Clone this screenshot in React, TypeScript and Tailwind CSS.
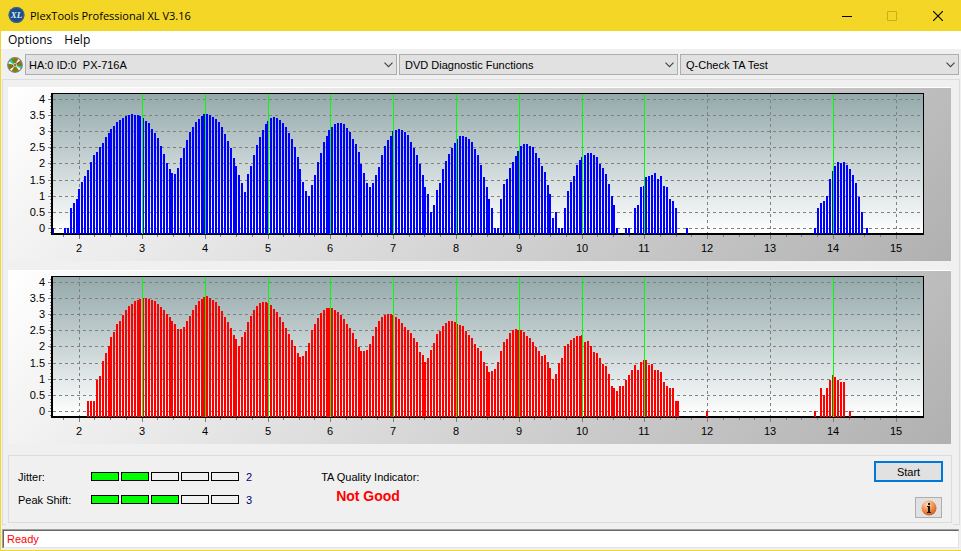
import React, { useState } from 'react';

// Height of every sample bar in px above the floor of the plot; `from` is the index of the first one.
type Run = { from: number; heights: number[] };

const PITS: Run[] = [
  { from: -9, heights: [6] },
  {
    from: -5,
    heights: [
      6, 6, 26, 31, 35, 45, 52, 58, 64, 72, 79, 82, 87, 91, 97, 101, 105, 108, 112, 114, 116, 118, 119, 120, 119, 119,
      118, 116, 113, 111, 105, 101, 96, 88, 80, 71, 65, 61, 60, 66, 76, 86, 94, 102, 107, 112, 115, 118, 120, 120, 119,
      117, 115, 112, 107, 100, 93, 86, 76, 68, 59, 51, 42, 60, 68, 79, 89, 97, 104, 110, 113, 116, 117, 116, 114, 111,
      107, 101, 95, 87, 77, 65, 52, 43, 38, 49, 59, 72, 81, 92, 98, 104, 107, 110, 111, 111, 110, 106, 102, 95, 90, 82,
      70, 61, 51, 47, 51, 59, 67, 79, 88, 94, 98, 103, 104, 105, 104, 102, 99, 92, 86, 79, 70, 59, 47, 40, 22, 29, 44,
      51, 65, 73, 80, 86, 91, 95, 98, 98, 97, 95, 92, 85, 79, 69, 57, 47, 35, 26, 6, 6, 35, 50, 55, 66, 72, 78, 83, 88,
      90, 90, 88, 87, 81, 76, 68, 62, 49, 40, 16, 22, 6, 6, 26, 43, 52, 58, 69, 74, 77, 79, 81, 81, 79, 77, 70, 66, 60,
      50, 38, 29, 6,
    ],
  },
  { from: 188, heights: [6, 6, 0, 26, 29, 47, 48, 57, 58, 59, 61, 55, 58, 48, 47, 35, 33, 26] },
  { from: 209, heights: [6] },
  { from: 253, heights: [6, 26, 31, 33, 38, 55, 63, 68, 72, 71, 72, 69, 65, 59, 51, 37, 22, 0, 6] },
];

const LANDS: Run[] = [
  {
    from: 3,
    heights: [
      16, 16, 16, 37, 41, 56, 64, 71, 80, 85, 93, 96, 102, 107, 111, 113, 116, 117, 118, 119, 119, 118, 117, 116, 113,
      110, 107, 103, 100, 96, 93, 88, 88, 90, 96, 101, 107, 112, 116, 118, 120, 121, 119, 117, 115, 111, 106, 100, 95,
      89, 82, 78, 71, 80, 85, 95, 101, 107, 111, 114, 115, 115, 114, 112, 108, 105, 100, 95, 89, 83, 77, 71, 64, 60, 61,
      66, 74, 87, 93, 99, 104, 107, 109, 109, 109, 107, 105, 102, 98, 93, 89, 84, 78, 70, 66, 66, 67, 73, 81, 90, 96,
      100, 102, 103, 103, 102, 100, 98, 94, 90, 87, 84, 79, 75, 65, 62, 55, 59, 67, 74, 83, 86, 91, 94, 96, 96, 95, 93,
      92, 91, 86, 82, 79, 73, 69, 66, 55, 51, 45, 46, 48, 55, 66, 75, 78, 84, 87, 88, 87, 87, 85, 81, 79, 75, 70, 66,
      61, 62, 55, 49, 38, 43, 54, 59, 71, 73, 77, 79, 81, 81, 82, 75, 76, 71, 65, 64, 59, 53, 51, 43, 31, 29, 26, 31,
      31, 37, 42, 47, 52, 47, 55, 57, 57, 52, 53, 47, 47, 45, 35, 31, 29, 29, 16, 16,
    ],
  },
  { from: 216, heights: [6] },
  { from: 253, heights: [6, 0, 29, 22, 29, 37, 42, 40, 37, 35, 35, 0, 6] },
];

const X_TICKS = [
  { label: 2, x: 71 }, { label: 3, x: 134 }, { label: 4, x: 197 }, { label: 5, x: 260 }, { label: 6, x: 322 },
  { label: 7, x: 385 }, { label: 8, x: 448 }, { label: 9, x: 511 }, { label: 10, x: 574 }, { label: 11, x: 636 },
  { label: 12, x: 699 }, { label: 13, x: 762 }, { label: 14, x: 825 }, { label: 15, x: 888 },
];

const Y_TICKS = [
  { label: '4', y: 12 }, { label: '3.5', y: 28 }, { label: '3', y: 44 }, { label: '2.5', y: 60 }, { label: '2', y: 76 },
  { label: '1.5', y: 93 }, { label: '1', y: 109 }, { label: '0.5', y: 125 }, { label: '0', y: 141 },
];

const MARKERS = [3, 4, 5, 6, 7, 8, 9, 10, 11, 14];
const FLOOR = 147;

// 65 samples take 189 px
const barX = (i: number) => 70 + 3 * i - Math.floor((i * 6 + 4) / 65);

const minorX = Array.from({ length: 54 }, (_, i) => Math.round(55 + i * 15.71)).filter(
  x => !X_TICKS.some(t => Math.abs(t.x - x) < 3)
);
const minorY = Array.from({ length: 43 }, (_, i) => Math.round(9 + i * 3.23));

const Chart: React.FC<{ id: string; title: string; color: string; runs: Run[] }> = ({ id, title, color, runs }) => (
  <svg viewBox="0 0 943 174" className="block w-full" role="img" aria-label={title} shapeRendering="crispEdges">
    <defs>
      <linearGradient id={`${id}-panel`} gradientUnits="userSpaceOnUse" x1="386" y1="-386" x2="943" y2="174">
        <stop offset="0" stopColor="#ffffff" />
        <stop offset="1" stopColor="#b0b0b0" />
      </linearGradient>
      <linearGradient id={`${id}-plot`} x1="0" y1="0" x2="0" y2="1">
        <stop offset="0" stopColor="#94a9ab" />
        <stop offset="1" stopColor="#ffffff" />
      </linearGradient>
    </defs>
    <rect width="943" height="174" fill={`url(#${id}-panel)`} />
    <rect width="943" height="1" fill="#ffffff" />
    <rect x="45" y="7" width="870" height="139" fill={`url(#${id}-plot)`} />

    <g stroke="#808080" strokeWidth="1" strokeDasharray="3 3">
      {Y_TICKS.map(t => <line key={t.label} x1="45" x2="915" y1={t.y + 0.5} y2={t.y + 0.5} />)}
      {X_TICKS.map(t => <line key={t.label} x1={t.x + 0.5} x2={t.x + 0.5} y1="7" y2="146" />)}
    </g>

    <path d="M43 6H916V148H43Z M45 7V146H915V7Z" fillRule="evenodd" fill="#000000" />

    <g fill={color}>
      {runs.map(run =>
        run.heights.map((h, k) => (
          <rect key={run.from + k} x={barX(run.from + k)} y={FLOOR - h} width="2" height={h} />
        ))
      )}
    </g>
    <rect x="43" y="6" width="2" height="142" fill="#000000" />

    <g fill="#00ff00">
      {X_TICKS.filter(t => MARKERS.includes(t.label)).map(t => (
        <rect key={t.label} x={t.x} y="7" width="1" height="140" />
      ))}
    </g>

    <g fill="#808080">
      {Y_TICKS.map(t => <rect key={t.label} x="40" y={t.y} width="3" height="1" />)}
      {minorY.map(y => <rect key={y} x="42" y={y} width="1" height="1" />)}
      {X_TICKS.map(t => <rect key={t.label} x={t.x} y="148" width="1" height="4" />)}
      {minorX.map(x => <rect key={x} x={x} y="148" width="1" height="2" />)}
    </g>

    <g fontSize="11" fill="#000000">
      {Y_TICKS.map(t => <text key={t.label} x="37" y={t.y + 4} textAnchor="end">{t.label}</text>)}
      {X_TICKS.map(t => <text key={t.label} x={t.x} y="165" textAnchor="middle">{t.label}</text>)}
    </g>
  </svg>
);

const Combo: React.FC<{ label: string; options: string[]; inset?: boolean }> = ({ label, options, inset }) => (
  <div className="relative">
    <select
      aria-label={label}
      className={`block h-[21px] w-full appearance-none border border-[#adadad] bg-[#e1e1e1] pr-5 text-[11px] text-black outline-none ${inset ? 'pl-[5px]' : 'pl-[3px]'}`}
    >
      {options.map(o => <option key={o}>{o}</option>)}
    </select>
    <svg className="pointer-events-none absolute top-[8px] right-1 h-[6px] w-[9px]" viewBox="0 0 9 6">
      <path d="M0.5 0.7 4.5 4.7 8.5 0.7" fill="none" stroke="#404040" strokeWidth="1.1" />
    </svg>
  </div>
);

const Meter: React.FC<{ label: string; value: number }> = ({ label, value }) => (
  <div className="flex h-[23px] items-center">
    <span className="w-[73px]">{label}:</span>
    <div
      role="meter"
      aria-label={label}
      aria-valuemin={0}
      aria-valuemax={5}
      aria-valuenow={value}
      className="flex gap-[2px]"
    >
      {[1, 2, 3, 4, 5].map(n => (
        <span key={n} className={`h-[9px] w-7 border border-black ${n <= value ? 'bg-[#00ff00]' : 'bg-[#f0f0f0]'}`} />
      ))}
    </div>
    <span className="ml-[7px] text-[#000080]">{value}</span>
  </div>
);

const LogoIcon = () => (
  <svg width="17" height="17" viewBox="0 0 17 17" aria-hidden="true">
    <circle cx="8.5" cy="8" r="8" fill="#1d4e8c" />
    <circle cx="8.5" cy="8" r="7.4" fill="none" stroke="#4a6f86" strokeWidth="0.8" />
    <text
      x="8.5" y="11" textAnchor="middle" fontSize="9" fontWeight="bold" fontStyle="italic" fill="#dfeaf6"
      className="font-['Liberation_Serif',serif]"
    >
      XL
    </text>
  </svg>
);

const DiscIcon = () => (
  <svg width="16" height="16" viewBox="0 0 16 16" aria-hidden="true">
    <circle cx="8" cy="8" r="7.3" fill="#808000" stroke="#808080" strokeWidth="1.2" />
    <path d="M8 8 1.4 6.6 2.2 4.4Z" fill="#ffffff" />
    <path d="M8 8 2.2 4.4 4 2.4Z" fill="#00e0e0" />
    <path d="M8 8 11.4 2 13 3.6Z" fill="#ffffff" />
    <path d="M8 8 14.4 9.4 13.6 11.8Z" fill="#00e0e0" />
    <path d="M8 8 13.6 11.8 12 13.4Z" fill="#ffffff" />
    <path d="M8 8 4.6 14 3 12.4Z" fill="#ffffff" />
    <path d="M8 8 4.2 10.6M8 8 11.8 5.4" stroke="#c000c0" strokeWidth="1" />
    <circle cx="8" cy="8" r="2" fill="#c8c8c8" />
    <circle cx="8" cy="8" r="0.9" fill="#606000" />
  </svg>
);

const InfoIcon = () => (
  <svg width="16" height="16" viewBox="0 0 16 16" aria-hidden="true">
    <defs>
      <radialGradient id="info" cx="0.38" cy="0.25" r="0.8">
        <stop offset="0" stopColor="#ffd9bd" />
        <stop offset="0.45" stopColor="#f59a5c" />
        <stop offset="1" stopColor="#c85a14" />
      </radialGradient>
    </defs>
    <circle cx="8" cy="8" r="7.5" fill="url(#info)" />
    <path d="M7 3H9V5H7ZM6 6H9V12H10V13H6V12H7V7H6Z" fill="#1a1a1a" />
  </svg>
);

const App: React.FC = () => {
  const [status, setStatus] = useState('Ready');

  return (
    <div className="flex min-h-screen flex-col border-b border-l border-[#f4d726] bg-[#f0f0f0] font-['Liberation_Sans',Arial,sans-serif] text-[11px] leading-4 text-black">
      <header className="flex h-[31px] items-center bg-[#f4d726] pl-[7px]">
        <LogoIcon />
        <h1 className="ml-[5px] font-['Open_Sans',sans-serif] text-[11px]">PlexTools Professional XL V3.16</h1>
        <div className="ml-auto flex">
          <button aria-label="Minimize" className="flex h-[30px] w-[45px] items-center justify-center">
            <svg width="10" height="10" viewBox="0 0 10 10"><path d="M0 5.5H10" stroke="#000000" /></svg>
          </button>
          <button aria-label="Maximize" disabled className="flex h-[30px] w-[46px] items-center justify-center">
            <svg width="10" height="10" viewBox="0 0 10 10"><path d="M.5.5H9.5V9.5H.5Z" fill="none" stroke="#c5ae20" /></svg>
          </button>
          <button aria-label="Close" className="flex h-[30px] w-[46px] items-center justify-center">
            <svg width="10" height="10" viewBox="0 0 10 10"><path d="M0 0 10 10M10 0 0 10" stroke="#000000" strokeWidth="1.1" /></svg>
          </button>
        </div>
      </header>

      <nav className="flex h-[18px] items-center gap-3 bg-white pl-[7px] font-['Open_Sans',sans-serif] text-[12px]">
        <button className="leading-[18px]">Options</button>
        <button className="leading-[18px]">Help</button>
      </nav>

      <div className="flex items-center gap-[2px] pt-[5px] pr-[2px] pl-[6px]">
        <DiscIcon />
        <div className="grid flex-1 grid-cols-[4fr_3fr_3fr] gap-[2px]">
          <Combo label="Drive" options={['HA:0 ID:0\u00a0 PX-716A']} />
          <Combo label="Category" options={['DVD Diagnostic Functions']} inset />
          <Combo label="Function" options={['Q-Check TA Test']} inset />
        </div>
      </div>

      <main className="mt-1 mr-px ml-px border-x border-t border-[#dcdcdc] pt-[7px] pr-[7px] pl-[5px]">
        <div className="flex flex-col gap-[9px] pr-px">
          <Chart id="pits" title="Pit lengths" color="#0000ff" runs={PITS} />
          <Chart id="lands" title="Land lengths" color="#ff0000" runs={LANDS} />
        </div>

        <section className="mt-[11px] flex h-[68px] border border-[#dcdcdc] pr-2 pl-[9px]">
          <div className="pt-[9px]">
            <Meter label="Jitter" value={2} />
            <Meter label="Peak Shift" value={3} />
          </div>
          <div className="ml-[69px] pt-[13px]">
            <p>TA Quality Indicator:</p>
            <p className="mt-[3px] pl-[15px] text-[14px] font-bold text-[#ff0000]">Not Good</p>
          </div>
          <div className="ml-auto flex flex-col items-end pt-[5px]">
            <button
              onClick={() => setStatus('Ready')}
              className="h-[21px] w-[69px] border-2 border-[#0078d7] bg-[#e1e1e1] leading-[18px]"
            >
              Start
            </button>
            <button
              aria-label="Information"
              className="mt-[15px] mr-px flex h-[21px] w-[27px] items-center justify-center border border-[#adadad] bg-[#e1e1e1]"
            >
              <InfoIcon />
            </button>
          </div>
        </section>
      </main>
      <div className="mr-px ml-px flex justify-between">
        <span className="h-[2px] w-1 border-b border-l border-[#dcdcdc]" />
        <span className="h-[2px] w-[7px] border-r border-b border-[#dcdcdc]" />
      </div>

      <footer className="mt-1 mr-[2px] mb-[2px] ml-px border-t border-l border-[#a0a0a0]">
        <p role="status" className="h-[18px] border-t border-r border-b border-l border-t-[#696969] border-r-[#e3e3e3] border-b-[#e3e3e3] border-l-[#696969] bg-white pl-[3px] leading-[17px] text-[#ff0000]">
          {status}
        </p>
      </footer>
    </div>
  );
};

export default App;
